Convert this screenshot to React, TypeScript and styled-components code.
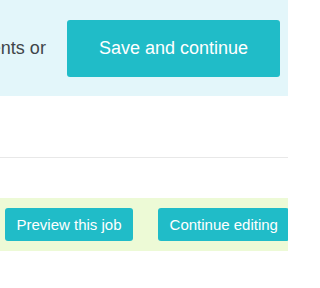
import React from 'react';
import styled, { createGlobalStyle } from 'styled-components';

const Global = createGlobalStyle`
  html, body {
    margin: 0;
    padding: 0;
    background: #fff;
    overflow: hidden;
  }
  body {
    font-family: "Liberation Sans", Arial, sans-serif;
    color: #3f4549;
  }
`;

const Page = styled.div`
  width: 288px;
  height: 288px;
  overflow: hidden;
`;

const SaveBar = styled.div`
  display: flex;
  justify-content: flex-end;
  align-items: center;
  gap: 21px;
  height: 96px;
  padding: 1px 8px 0 0;
  box-sizing: border-box;
  background: #e3f6fa;
`;

const Hint = styled.span`
  flex: none;
  white-space: nowrap;
  font-size: 18px;
  color: #3f4549;
`;

const Button = styled.button<{ $big?: boolean }>`
  flex: none;
  border: 0;
  border-radius: 3px;
  background: #20bcc8;
  color: #fff;
  font-family: "Liberation Sans", Arial, sans-serif;
  white-space: nowrap;
  cursor: pointer;
  font-size: ${p => (p.$big ? '18px' : '15px')};
  height: ${p => (p.$big ? '57px' : '33px')};
  padding: ${p => (p.$big ? '0 32px' : '0 11.5px')};
`;

const Divider = styled.hr`
  margin: 61px 0 0;
  border: 0;
  border-top: 1px solid #e8e8e8;
`;

const PreviewBar = styled.div`
  display: flex;
  align-items: center;
  gap: 25px;
  margin-top: 40px;
  height: 53px;
  padding-left: 5px;
  background: #edfad6;
`;

export default function App() {
  return (
    <Page>
      <Global />
      <SaveBar>
        <Hint>You can also add attachments or</Hint>
        <Button $big>Save and continue</Button>
      </SaveBar>
      <Divider />
      <PreviewBar>
        <Button>Preview this job</Button>
        <Button>Continue editing</Button>
      </PreviewBar>
    </Page>
  );
}
